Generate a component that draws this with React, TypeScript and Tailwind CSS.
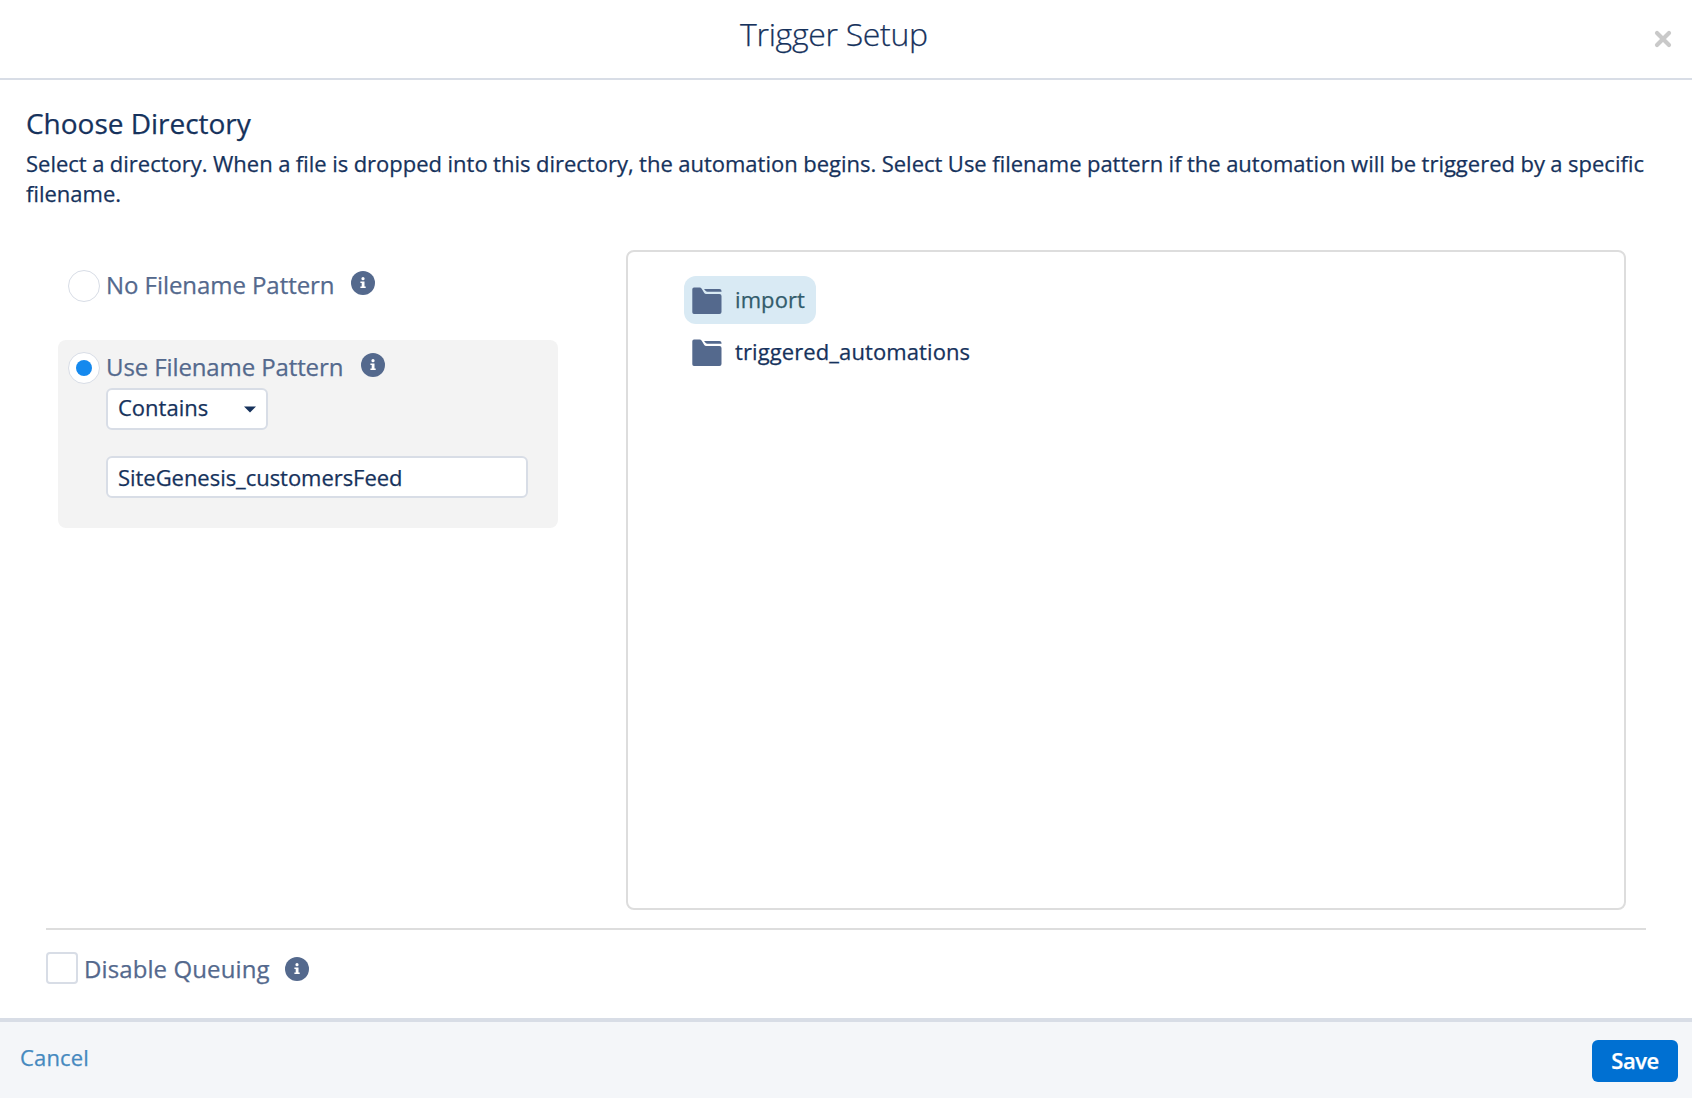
import React from "react";

function InfoIcon({ className = "" }: { className?: string }) {
  return (
    <svg viewBox="0 0 24 24" className={`size-6 shrink-0 ${className}`}>
      <circle cx="12" cy="12" r="12" fill="#54698d" />
      <circle cx="12" cy="7.700" r="1.600" fill="#fff" />
      <path d="M9.400 10.400h4.100v5h1.200v1.600H9.400v-1.600h1.300V12H9.400z" fill="#fff" />
    </svg>
  );
}

function FolderIcon() {
  return (
    <svg viewBox="0 0 30 28" className="mt-[2px] h-7 w-[30px] shrink-0" fill="#54698d">
      <path d="M2 .5h5.600q1.300 0 2.100 1.200l2.400 4q.7 1.300 2.200 1.300H27.500q2 0 2 2v16q0 2-2 2H2q-1.700 0-1.700-1.700V2.200Q.3.500 2 .5z" />
      <path d="M12 2h15.500q2 0 2 2v.8H15.400q-1.100 0-1.700-.8z" />
    </svg>
  );
}

function Radio({ checked = false }: { checked?: boolean }) {
  return (
    <span className="flex size-8 shrink-0 items-center justify-center rounded-full border border-[#d8dde6] bg-white">
      {checked && <span className="size-4 rounded-full bg-[#1589ee]" />}
    </span>
  );
}

export default function App() {
  return (
    <div className="flex h-[1098px] w-[1692px] flex-col overflow-hidden bg-white font-['Open_Sans',sans-serif] whitespace-nowrap text-[#16325c] [-webkit-text-stroke:0.25px_currentColor]">
      <header className="flex h-20 shrink-0 border-b-2 border-[#d8dde6]">
        <h1 className="ml-[740px] pt-[10px] text-[32px] leading-[48px] font-light tracking-[-0.3px]">Trigger Setup</h1>
        <button className="mt-[30px] mr-[20px] ml-auto size-[18px]">
          <svg viewBox="0 0 18 18" className="size-[18px]" stroke="#c9c9c9" strokeWidth="4.200" strokeLinecap="round">
            <path d="M3 3l12 12M15 3L3 15" />
          </svg>
        </button>
      </header>

      <main className="flex grow flex-col">
        <section className="h-[170px] pt-[23px] pl-[26px]">
          <h2 className="text-[28px] leading-[40px] tracking-[-0.02px]">Choose Directory</h2>
          <p className="mt-[5px] text-[22px] leading-[30px] [word-spacing:-0.26px]">
            Select a directory. When a file is dropped into this directory, the automation begins. Select Use filename pattern if the automation will be triggered by a specific
            <br />
            filename.
          </p>
        </section>

        <div className="flex">
          <div className="ml-[58px] w-[500px] text-[24px] text-[#54698d]">
            <div className="mt-5 flex h-8 items-center pl-[10px]">
              <Radio />
              <span className="mb-[2px] ml-[6px] w-[229px] tracking-[-0.06px]">No Filename Pattern</span>
              <InfoIcon className="mb-[6px] ml-[16px]" />
            </div>
            <div className="mt-[38px] h-[188px] rounded-lg bg-[#f3f3f3] pt-3 pl-[10px]">
              <div className="flex h-8 items-center">
                <Radio checked />
                <span className="mb-[2px] ml-[6px] w-[239px] tracking-[-0.11px]">Use Filename Pattern</span>
                <InfoIcon className="mb-[6px] ml-[16px]" />
              </div>
              <div className="mt-1 ml-[38px] flex h-[42px] w-[162px] items-center justify-between rounded-md border-2 border-[#d8dde6] bg-white pr-[10px] pb-[3px] pl-[10px] text-[22px] text-[#16325c]">
                <span>Contains</span>
                <svg viewBox="0 0 12 7" className="mt-1 h-[7px] w-3" fill="#16325c">
                  <path d="M0 .5h12L6 6.500z" />
                </svg>
              </div>
              <div className="mt-[26px] ml-[38px] flex h-[42px] w-[422px] items-center rounded-md border-2 border-[#d8dde6] bg-white pl-[10px] text-[22px] tracking-[-0.04px] text-[#16325c]">
                <span>SiteGenesis_customersFeed</span>
              </div>
            </div>
          </div>

          <div className="ml-[68px] flex h-[660px] w-[1000px] flex-col items-start rounded-lg border-2 border-[#dddddd] pt-6 pl-14 text-[22px]">
            <div className="flex h-12 w-[132px] items-center rounded-xl bg-[#d9eaf4] pl-2 text-[#325c6b]">
              <FolderIcon />
              <span className="mb-[2px] ml-[13px] tracking-[0.1px]">import</span>
            </div>
            <div className="mt-1 flex h-12 items-center pl-2">
              <FolderIcon />
              <span className="mb-[2px] ml-[13px] tracking-[0.1px]">triggered_automations</span>
            </div>
          </div>
        </div>

        <div className="mt-[18px] ml-[46px] w-[1600px] border-t-2 border-[#dddddd] pt-[22px]">
          <div className="flex h-8 items-center text-[24px] text-[#54698d]">
            <span className="size-8 shrink-0 rounded border-2 border-[#d8dde6] bg-white" />
            <span className="ml-[6px] w-[185px] pt-[2px] tracking-[0.1px]">Disable Queuing</span>
            <InfoIcon className="mt-[2px] ml-[16px]" />
          </div>
        </div>
      </main>

      <footer className="flex h-20 shrink-0 items-start justify-between border-t-4 border-[#d8dde6] bg-[#f4f6f9] pr-[14px] pl-[20px] text-[22px]">
        <a className="mt-[20px] leading-[30px] tracking-[0.15px] text-[#4589bf]">Cancel</a>
        <button className="mt-[18px] h-[42px] w-[86px] rounded-md bg-[#0070d2] pb-[2px] text-[22px] font-semibold tracking-[-0.5px] text-white">Save</button>
      </footer>
    </div>
  );
}
